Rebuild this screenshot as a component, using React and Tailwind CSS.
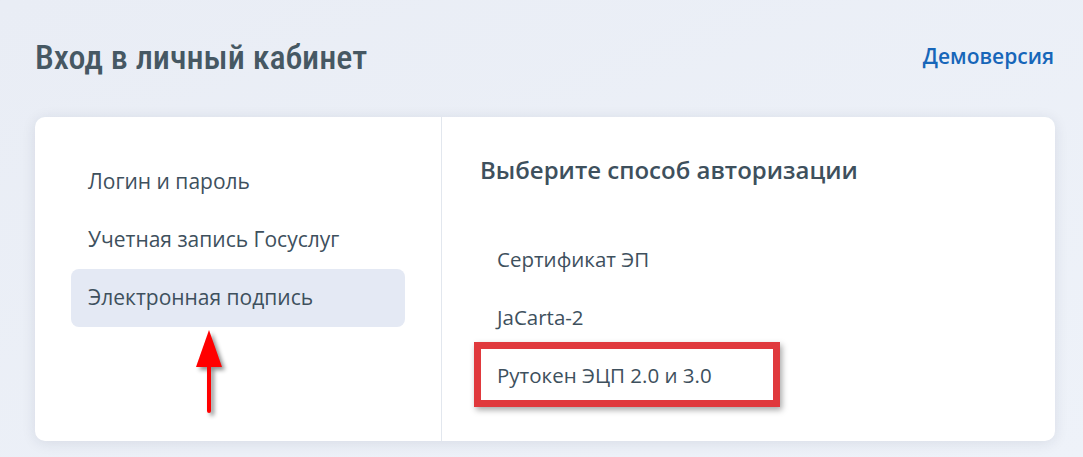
const leftItems = ["Логин и пароль", "Учетная запись Госуслуг", "Электронная подпись"];
const rightItems = ["Сертификат ЭП", "JaCarta-2", "Рутокен ЭЦП 2.0 и 3.0"];

const Arrow = () => (
    <svg
        className="absolute left-[160px] top-[213px] drop-shadow-[3px_3px_2px_rgba(0,0,0,0.45)]"
        width="30"
        height="86"
        viewBox="0 0 30 86"
    >
        <polygon points="14,0 1,37 27,37" fill="#ff0000" />
        <rect x="12" y="34" width="4" height="49" rx="2" fill="#ff0000" />
    </svg>
);

export default function App() {
    return (
        <div className="min-h-[457px] w-full bg-gradient-to-br from-[#e9edf5] to-[#eef2f9] px-[35px] pt-[37px] font-['Open_Sans',sans-serif] text-[#3e505d]">
            {/* Header */}
            <div className="flex w-[1020px] items-center justify-between pr-[1px]">
                <h1 className="font-['Roboto',sans-serif] text-[34px] font-medium leading-[40px] text-[#465863] [font-stretch:75%]">
                    Вход в личный кабинет
                </h1>
                <a href="#" className="text-[21px] font-semibold text-[#1766b9]">
                    Демоверсия
                </a>
            </div>

            {/* Card */}
            <div className="mt-[40px] flex h-[324px] w-[1020px] overflow-hidden rounded-[10px] bg-white shadow-[0_2px_14px_rgba(30,40,70,0.10)]">
                <div className="relative w-[407px] border-r border-[#e2e7ee] px-[36px] pt-[36px]">
                    {leftItems.map((item, i) => (
                        <div
                            key={item}
                            className={`flex h-[58px] items-center rounded-[8px] px-[17px] text-[21px] ${i === 2 ? "bg-[#e4e9f4]" : ""}`}
                        >
                            {item}
                        </div>
                    ))}
                    <Arrow />
                </div>

                <div className="flex-1 pl-[38px] pt-[37px]">
                    <h2 className="text-[24px] font-semibold leading-[32px] text-[#3e505d]">
                        Выберите способ авторизации
                    </h2>
                    <div className="mt-[44px]">
                        {rightItems.map((item, i) => (
                            <div key={item} className="relative flex h-[58px] w-[300px] items-center pl-[17px] text-[20.5px]">
                                {item}
                                {i === 2 && (
                                    <div className="absolute -left-[6px] top-[-4px] h-[65px] w-[306px] border-[7px] border-[#e0393d] shadow-[2px_3px_6px_rgba(0,0,0,0.35)]" />
                                )}
                            </div>
                        ))}
                    </div>
                </div>
            </div>
        </div>
    );
}
